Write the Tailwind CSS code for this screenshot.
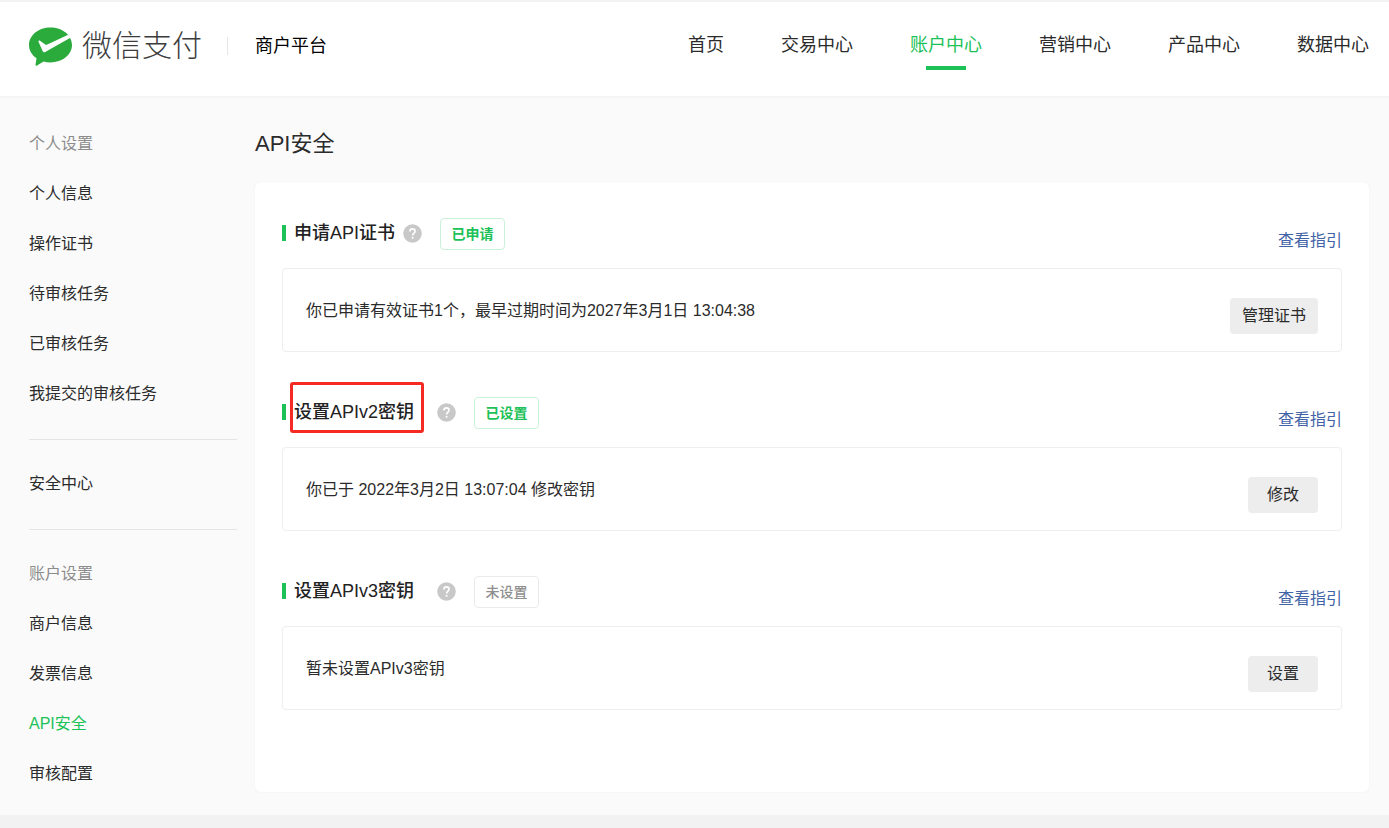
<!DOCTYPE html>
<html lang="zh-CN">
<head>
    <meta charset="UTF-8">
    <meta name="viewport" content="width=device-width, initial-scale=1.0">
    <title>API安全 - 微信支付商户平台</title>
    <script src="https://cdn.jsdelivr.net/npm/@tailwindcss/browser@4"></script>
</head>
<body class="bg-[#fafafa] min-h-screen flex flex-col text-base leading-6 text-[#2b2b2b] font-['Liberation_Sans','Noto_Sans_CJK_SC',sans-serif]">
    <!-- Header -->
    <header class="bg-white border-t-2 border-b-2 border-t-[#f2f2f2] border-b-[#f5f5f5] h-[98px] pl-[29px] pr-5 flex items-start justify-between">
        <div class="flex items-center h-[88px]">
            <a href="#" class="flex items-center gap-[10px]">
                <svg class="w-[43px] h-[39px]" viewBox="0 0 43 39" aria-hidden="true">
                    <path fill="#2aab3c" d="M21.500 0.500C9.600 0.500 0 8.300 0 18c0 5.400 2.900 10.100 7.500 13.300L6.500 38c0 .7.500 1 1.200.7l6.800-4.200c2.200.6 4.500.9 7 .9C33.400 35.400 43 27.700 43 18 43 8.300 33.400.5 21.500.5z"/>
                    <path fill="#fff" d="M9.500 14.800c-.3-1 .6-1.700 1.500-1.100l5.300 3.700c.6.400 1.300.4 2 .1L39.200 7.800l2.200 3L16.200 25c-1 .6-2 .2-2.500-.8z"/>
                </svg>
                <span class="text-[30px] leading-[44px] font-light text-[#3c3c3c]">微信支付</span>
            </a>
            <div class="w-px h-[18px] bg-[#e6e6e6] ml-[25px] mr-[27px]"></div>
            <span class="text-lg text-black">商户平台</span>
        </div>
        <nav class="flex gap-[57px] pt-[29px] text-lg">
            <a href="#" class="leading-7">首页</a>
            <a href="#" class="leading-7">交易中心</a>
            <a href="#" class="leading-7 text-[#1cc158] flex flex-col items-center gap-[7px]">
                账户中心
                <span class="w-10 h-1 bg-[#1cc158]"></span>
            </a>
            <a href="#" class="leading-7">营销中心</a>
            <a href="#" class="leading-7">产品中心</a>
            <a href="#" class="leading-7">数据中心</a>
        </nav>
    </header>

    <div class="flex gap-[18px] pl-[29px] pr-5 pb-4">
        <!-- Sidebar -->
        <aside class="w-[208px] shrink-0 pt-[21px]">
            <h2 class="leading-[50px] text-[#8c8c8c]">个人设置</h2>
            <ul class="leading-[50px]">
                <li><a href="#">个人信息</a></li>
                <li><a href="#">操作证书</a></li>
                <li><a href="#">待审核任务</a></li>
                <li><a href="#">已审核任务</a></li>
                <li><a href="#">我提交的审核任务</a></li>
            </ul>
            <hr class="border-[#e4e4e4] mt-5 mb-[19px]">
            <ul class="leading-[50px]">
                <li><a href="#">安全中心</a></li>
            </ul>
            <hr class="border-[#e4e4e4] mt-5 mb-[19px]">
            <h2 class="leading-[50px] text-[#8c8c8c]">账户设置</h2>
            <ul class="leading-[50px]">
                <li><a href="#">商户信息</a></li>
                <li><a href="#">发票信息</a></li>
                <li><a href="#" class="text-[#1cc158]">API安全</a></li>
                <li><a href="#">审核配置</a></li>
            </ul>
        </aside>

        <!-- Content -->
        <main class="flex-1 pt-[30px]">
            <h1 class="text-[22px] leading-8 mb-[22px]">API安全</h1>
            <div class="bg-white rounded-md shadow-[0_0_2px_#eeeeee] px-[27px] pt-9 pb-[82px] flex flex-col gap-[45px]">
                <!-- API certificate -->
                <section>
                    <div class="flex items-start justify-between h-[50px]">
                        <div class="flex h-8">
                            <div class="flex items-center pb-0.5">
                                <span class="w-1 h-4 bg-[#1cc158] mr-2"></span>
                                <h3 class="text-lg font-medium text-[#222]">申请API证书</h3>
                                <button type="button" aria-label="帮助" class="w-[19px] h-[19px] ml-2 mr-[18px]">
                                    <svg viewBox="0 0 19 19" aria-hidden="true">
                                        <circle cx="9.500" cy="9.500" r="9.300" fill="#c8c8c8"/>
                                        <path d="M6.900 7.500c0-1.600 1.100-2.600 2.600-2.600s2.600 1 2.600 2.300c0 1.800-2.500 2-2.500 4.200" fill="none" stroke="#fff" stroke-width="1.600"/>
                                        <circle cx="9.600" cy="13.700" r="1.050" fill="#fff"/>
                                    </svg>
                                </button>
                            </div>
                            <span class="w-[65px] h-8 border border-[#c9f2d8] rounded text-sm leading-[30px] font-bold text-center text-[#1cc158]">已申请</span>
                        </div>
                        <a href="#" class="mt-[11px] text-[#4263a6]">查看指引</a>
                    </div>
                    <div class="flex items-center justify-between h-[84px] px-[23px] border border-[#eeeeee] rounded">
                        <p class="pt-0.5">你已申请有效证书1个，最早过期时间为2027年3月1日 13:04:38</p>
                        <button type="button" class="min-w-[70px] h-9 px-3 mt-[11px] rounded bg-[#ededed]">管理证书</button>
                    </div>
                </section>

                <!-- APIv2 key -->
                <section>
                    <div class="flex items-start justify-between h-[50px]">
                        <div class="flex h-8">
                            <div class="flex items-center pb-0.5">
                                <span class="w-1 h-4 bg-[#1cc158] mr-2"></span>
                                <div class="relative">
                                    <h3 class="text-lg font-medium text-[#222]">设置APIv2密钥</h3>
                                    <div class="absolute -left-1 -right-[10px] -top-4 h-[51px] border-3 border-[#f52a22] rounded-[3px]"></div>
                                </div>
                                <button type="button" aria-label="帮助" class="w-[19px] h-[19px] ml-[23px] mr-[18px]">
                                    <svg viewBox="0 0 19 19" aria-hidden="true">
                                        <circle cx="9.500" cy="9.500" r="9.300" fill="#c8c8c8"/>
                                        <path d="M6.900 7.500c0-1.600 1.100-2.600 2.600-2.600s2.600 1 2.600 2.300c0 1.800-2.500 2-2.500 4.200" fill="none" stroke="#fff" stroke-width="1.600"/>
                                        <circle cx="9.600" cy="13.700" r="1.050" fill="#fff"/>
                                    </svg>
                                </button>
                            </div>
                            <span class="w-[65px] h-8 border border-[#c9f2d8] rounded text-sm leading-[30px] font-bold text-center text-[#1cc158]">已设置</span>
                        </div>
                        <a href="#" class="mt-[11px] text-[#4263a6]">查看指引</a>
                    </div>
                    <div class="flex items-center justify-between h-[84px] px-[23px] border border-[#eeeeee] rounded">
                        <p class="pt-0.5">你已于 2022年3月2日 13:07:04 修改密钥</p>
                        <button type="button" class="min-w-[70px] h-9 px-3 mt-[11px] rounded bg-[#ededed]">修改</button>
                    </div>
                </section>

                <!-- APIv3 key -->
                <section>
                    <div class="flex items-start justify-between h-[50px]">
                        <div class="flex h-8">
                            <div class="flex items-center pb-0.5">
                                <span class="w-1 h-4 bg-[#1cc158] mr-2"></span>
                                <h3 class="text-lg font-medium text-[#222]">设置APIv3密钥</h3>
                                <button type="button" aria-label="帮助" class="w-[19px] h-[19px] ml-[23px] mr-[18px]">
                                    <svg viewBox="0 0 19 19" aria-hidden="true">
                                        <circle cx="9.500" cy="9.500" r="9.300" fill="#c8c8c8"/>
                                        <path d="M6.900 7.500c0-1.600 1.100-2.600 2.600-2.600s2.600 1 2.600 2.300c0 1.800-2.500 2-2.500 4.200" fill="none" stroke="#fff" stroke-width="1.600"/>
                                        <circle cx="9.600" cy="13.700" r="1.050" fill="#fff"/>
                                    </svg>
                                </button>
                            </div>
                            <span class="w-[65px] h-8 border border-[#ebebeb] rounded text-sm leading-[30px] font-medium text-center text-[#8f8f8f]">未设置</span>
                        </div>
                        <a href="#" class="mt-[11px] text-[#4263a6]">查看指引</a>
                    </div>
                    <div class="flex items-center justify-between h-[84px] px-[23px] border border-[#eeeeee] rounded">
                        <p class="pt-0.5">暂未设置APIv3密钥</p>
                        <button type="button" class="min-w-[70px] h-9 px-3 mt-[11px] rounded bg-[#ededed]">设置</button>
                    </div>
                </section>
            </div>
        </main>
    </div>

    <footer class="flex-1 bg-[#f2f2f2]"></footer>
</body>
</html>
